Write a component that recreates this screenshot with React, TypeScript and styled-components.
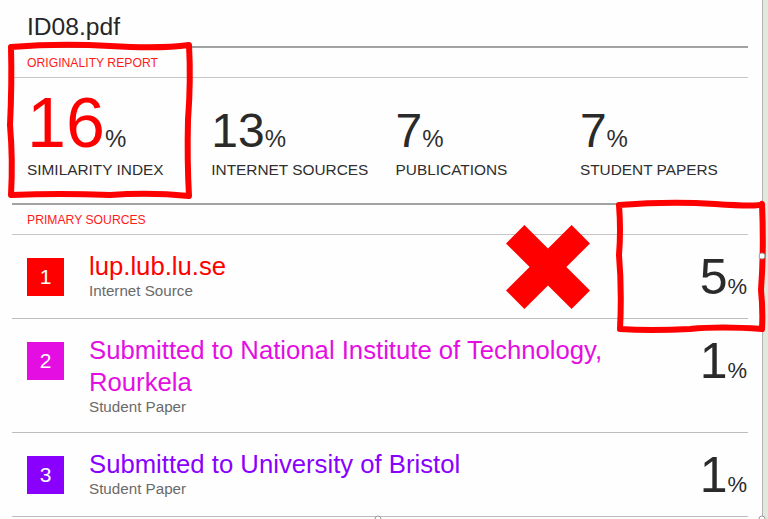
import React from "react";
import styled, { createGlobalStyle } from "styled-components";

interface Stat {
  value: number;
  label: string;
  highlight?: boolean;
}

interface Source {
  index: number;
  color: string;
  title: string;
  kind: string;
  percent: number;
}

const stats: Stat[] = [
  { value: 16, label: "SIMILARITY INDEX", highlight: true },
  { value: 13, label: "INTERNET SOURCES" },
  { value: 7, label: "PUBLICATIONS" },
  { value: 7, label: "STUDENT PAPERS" },
];

const sources: Source[] = [
  { index: 1, color: "#ff0000", title: "lup.lub.lu.se", kind: "Internet Source", percent: 5 },
  {
    index: 2,
    color: "#e40ee2",
    title: "Submitted to National Institute of Technology, Rourkela",
    kind: "Student Paper",
    percent: 1,
  },
  { index: 3, color: "#8a00ff", title: "Submitted to University of Bristol", kind: "Student Paper", percent: 1 },
];

const App: React.FC = () => {
  return (
    <Page>
      <GlobalStyle />
      <Main>
        <Report>
          <FileName>ID08.pdf</FileName>
          <SectionLabel>ORIGINALITY REPORT</SectionLabel>
          <StatsRow>
            {stats.map((s) => (
              <StatCell key={s.label}>
                <StatValue>
                  <StatNumber $highlight={!!s.highlight}>{s.value}</StatNumber>
                  <StatPercent>%</StatPercent>
                </StatValue>
                <StatLabel>{s.label}</StatLabel>
              </StatCell>
            ))}
          </StatsRow>
          <SectionLabel>PRIMARY SOURCES</SectionLabel>
          {sources.map((src) => (
            <SourceRow key={src.index}>
              <Badge $color={src.color}>{src.index}</Badge>
              <SourceText>
                <SourceTitle $color={src.color}>{src.title}</SourceTitle>
                <SourceKind>{src.kind}</SourceKind>
              </SourceText>
              <SourcePercent>
                {src.percent}
                <small>%</small>
              </SourcePercent>
            </SourceRow>
          ))}
        </Report>
      </Main>
      <SideStrip />
      <Annotations width="768" height="519" viewBox="0 0 768 519">
        <path
          d="M11,47 Q60,43 110,46 T189,45 Q191,80 188,120 Q187,160 189,196 Q150,192 110,195 Q60,193 11,195 Q13,160 10,125 Q12,85 11,47 Z"
          fill="none"
          stroke="#ff0000"
          strokeWidth="6"
          strokeLinejoin="round"
        />
        <path
          d="M619,205 Q670,201 715,204 T762,204 Q764,250 761,290 Q763,310 762,329 Q720,326 690,329 Q650,331 620,329 Q622,290 619,255 Q621,230 619,205 Z"
          fill="none"
          stroke="#ff0000"
          strokeWidth="6"
          strokeLinejoin="round"
        />
        <polygon
          transform="translate(548,267)"
          points="-23.6,-42 0,-18.4 23.6,-42 42,-23.6 18.4,0 42,23.6 23.6,42 0,18.4 -23.6,42 -42,23.6 -18.4,0 -42,-23.6"
          fill="#ff0000"
        />
        <circle cx="762" cy="256" r="3" fill="#fff" stroke="#9a9a9a" strokeWidth="1" />
        <circle cx="378" cy="519" r="3" fill="#fff" stroke="#9a9a9a" strokeWidth="1" />
        <circle cx="762" cy="519" r="3" fill="#fff" stroke="#9a9a9a" strokeWidth="1" />
      </Annotations>
    </Page>
  );
};

const GlobalStyle = createGlobalStyle`
  body {
    margin: 0;
    background: #ffffff;
    font-family: "Liberation Sans", Arial, sans-serif;
  }
`;

const Page = styled.div`
  position: relative;
  display: flex;
  width: 768px;
  height: 519px;
  overflow: hidden;
  background: #fefefe;
`;

const Main = styled.div`
  width: 762px;
  flex: none;
  border-right: 1px solid #b4b4b4;
`;

const SideStrip = styled.div`
  flex: 1;
  background: #dfe9dc;
`;

const Report = styled.div`
  margin-left: 12px;
  width: 736px;
  display: flex;
  flex-direction: column;
`;

const FileName = styled.div`
  height: 31px;
  padding: 15px 0 0 15px;
  font-size: 24.6px;
  line-height: 24px;
  color: #262626;
  border-bottom: 2px solid #a2a2a2;
`;

const SectionLabel = styled.div`
  height: 20px;
  padding: 9px 0 0 15px;
  font-size: 12.2px;
  line-height: 12px;
  color: #ff1a1a;
  border-bottom: 1px solid #c6c6c6;
`;

const StatsRow = styled.div`
  height: 115px;
  padding: 10px 0 0 15px;
  display: grid;
  grid-template-columns: repeat(4, 184.3px);
  border-bottom: 2px solid #a2a2a2;
`;

const StatCell = styled.div`
  display: flex;
  flex-direction: column;
`;

const StatValue = styled.div`
  font-size: 70px;
  line-height: 70px;
  height: 70px;
  white-space: nowrap;
`;

const StatNumber = styled.span<{ $highlight: boolean }>`
  font-size: ${(p) => (p.$highlight ? "70px" : "48px")};
  line-height: 0;
  color: ${(p) => (p.$highlight ? "#ff0000" : "#2a2a2a")};
`;

const StatPercent = styled.span`
  font-size: 24px;
  line-height: 0;
  color: #2e2e2e;
`;

const StatLabel = styled.div`
  margin-top: 2px;
  font-size: 15.4px;
  line-height: 20px;
  color: #2e2e2e;
`;

const SourceRow = styled.div`
  display: flex;
  align-items: flex-start;
  padding: 15px 0 16px 15px;
  border-bottom: 1px solid #bdbdbd;
`;

const Badge = styled.div<{ $color: string }>`
  flex: none;
  width: 37px;
  height: 38px;
  margin: 8px 25px 0 0;
  background: ${(p) => p.$color};
  color: #ffffff;
  font-size: 21px;
  display: flex;
  align-items: center;
  justify-content: center;
`;

const SourceText = styled.div`
  flex: 1;
  max-width: 560px;
  display: flex;
  flex-direction: column;
`;

const SourceTitle = styled.div<{ $color: string }>`
  font-size: 25.7px;
  line-height: 32px;
  color: ${(p) => p.$color};
`;

const SourceKind = styled.div`
  font-size: 15.2px;
  line-height: 18px;
  color: #6a6a6a;
`;

const SourcePercent = styled.div`
  margin: 2px 1px 0 auto;
  height: 50px;
  font-size: 50px;
  line-height: 50px;
  color: #2a2a2a;
  white-space: nowrap;

  small {
    font-size: 22px;
    line-height: 0;
  }
`;

const Annotations = styled.svg`
  position: absolute;
  left: 0;
  top: 0;
  pointer-events: none;
`;

export default App;
